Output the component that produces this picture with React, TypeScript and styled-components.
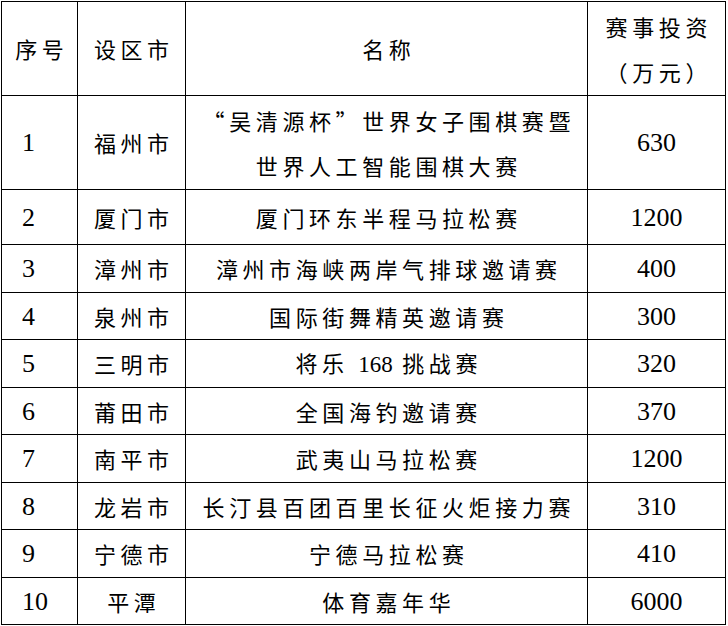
import styled, { createGlobalStyle } from 'styled-components';

const GlobalStyle = createGlobalStyle`
  html, body {
    margin: 0;
    padding: 0;
    background: #fff;
  }
  body {
    font-family: 'Noto Sans CJK SC', sans-serif;
    color: #000;
  }
`;

const Page = styled.div`
  padding: 1px 0 0 1px;
`;

const Table = styled.div`
  display: flex;
  flex-direction: column;
  width: 725px;
  border-top: 1px solid #000;
  border-left: 1px solid #000;
  box-sizing: border-box;
`;

const Row = styled.div<{ $h: number }>`
  display: grid;
  grid-template-columns: 76px 108px 402px 138px;
  height: ${(p) => p.$h}px;
`;

const Cell = styled.div<{ $align?: 'left' | 'center' }>`
  display: flex;
  flex-direction: column;
  justify-content: center;
  align-items: ${(p) => (p.$align === 'left' ? 'flex-start' : 'center')};
  padding-left: ${(p) => (p.$align === 'left' ? '20px' : '0')};
  border-right: 1px solid #000;
  border-bottom: 1px solid #000;
  box-sizing: border-box;
  overflow: hidden;
`;

const Text = styled.span`
  font-family: 'Noto Sans CJK SC', sans-serif;
  font-size: 22px;
  font-weight: 400;
  line-height: 45px;
  letter-spacing: 4.6px;
  white-space: nowrap;
  margin-right: -4.6px;
`;

const Num = styled.span<{ $size?: number }>`
  font-family: 'Liberation Serif', 'Times New Roman', serif;
  font-size: ${(p) => p.$size ?? 26}px;
  line-height: 45px;
  letter-spacing: 0;
`;

type Item = {
  no: number;
  city: string;
  name: React.ReactNode;
  money: string;
  h: number;
};

const items: Item[] = [
  {
    no: 1,
    city: '福州市',
    name: (
      <>
        <Text>“吴清源杯”世界女子围棋赛暨</Text>
        <Text>世界人工智能围棋大赛</Text>
      </>
    ),
    money: '630',
    h: 94,
  },
  { no: 2, city: '厦门市', name: <Text>厦门环东半程马拉松赛</Text>, money: '1200', h: 55 },
  { no: 3, city: '漳州市', name: <Text>漳州市海峡两岸气排球邀请赛</Text>, money: '400', h: 48 },
  { no: 4, city: '泉州市', name: <Text>国际街舞精英邀请赛</Text>, money: '300', h: 47 },
  {
    no: 5,
    city: '三明市',
    name: (
      <Text>
        将乐 <Num $size={23}>168</Num> 挑战赛
      </Text>
    ),
    money: '320',
    h: 48,
  },
  { no: 6, city: '莆田市', name: <Text>全国海钓邀请赛</Text>, money: '370', h: 47 },
  { no: 7, city: '南平市', name: <Text>武夷山马拉松赛</Text>, money: '1200', h: 48 },
  { no: 8, city: '龙岩市', name: <Text>长汀县百团百里长征火炬接力赛</Text>, money: '310', h: 47 },
  { no: 9, city: '宁德市', name: <Text>宁德马拉松赛</Text>, money: '410', h: 48 },
  { no: 10, city: '平潭', name: <Text>体育嘉年华</Text>, money: '6000', h: 47 },
];

export default function App() {
  return (
    <Page>
      <GlobalStyle />
      <Table>
        <Row $h={94}>
          <Cell>
            <Text>序号</Text>
          </Cell>
          <Cell>
            <Text>设区市</Text>
          </Cell>
          <Cell>
            <Text>名称</Text>
          </Cell>
          <Cell>
            <Text>赛事投资</Text>
            <Text>（万元）</Text>
          </Cell>
        </Row>
        {items.map((item) => (
          <Row key={item.no} $h={item.h}>
            <Cell $align='left'>
              <Num>{item.no}</Num>
            </Cell>
            <Cell>
              <Text>{item.city}</Text>
            </Cell>
            <Cell>{item.name}</Cell>
            <Cell>
              <Num>{item.money}</Num>
            </Cell>
          </Row>
        ))}
      </Table>
    </Page>
  );
}
